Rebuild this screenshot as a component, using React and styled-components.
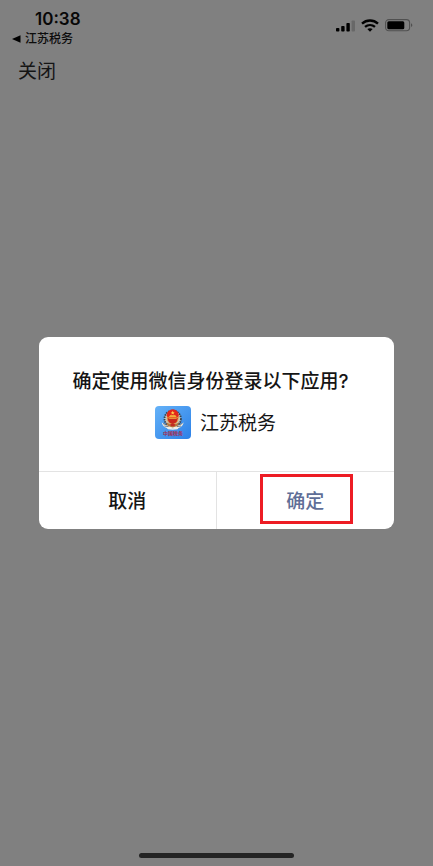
import React from "react";
import styled, { createGlobalStyle } from "styled-components";

const GlobalStyle = createGlobalStyle`
  * { box-sizing: border-box; }
  body {
    margin: 0;
    background: #808080;
    color: #151515;
    font-family: Inter, "Noto Sans CJK SC", sans-serif;
  }
  button { font-family: inherit; color: inherit; border: 0; background: none; padding: 0; cursor: pointer; }
`;

const Screen = styled.div`
  display: grid;
  grid-template-rows: 1fr auto 1fr;
  min-height: 100vh;
`;

const Header = styled.header`
  padding: 9px 20px 0 12px;
`;

const StatusBar = styled.div`
  display: flex;
  justify-content: space-between;
  align-items: flex-start;
`;

const Clock = styled.time`
  display: block;
  padding-left: 23px;
  font-size: 17px;
  line-height: 20px;
  font-weight: 600;
  color: #080808;
`;

const BackLink = styled.a`
  display: flex;
  align-items: center;
  gap: 4px;
  height: 20px;
  font-size: 12px;
  line-height: 20px;
  font-weight: 500;
  color: #0c0c0c;
  text-decoration: none;
`;

const StatusIcons = styled.div`
  display: flex;
  align-items: center;
  gap: 6px;
  padding-top: 10px;
`;

const CloseButton = styled.button`
  display: block;
  margin: 8px 0 0 6px;
  font-size: 19px;
  line-height: 30px;
`;

const Dialog = styled.section`
  margin: 0 39px;
  background: #fff;
  border-radius: 9px;
  overflow: hidden;
`;

const DialogBody = styled.div`
  display: flex;
  flex-direction: column;
  align-items: center;
  gap: 10px;
  padding: 31px 14px 32px 12px;
`;

const Title = styled.h1`
  margin: 0 10px 0 0;
  font-size: 19px;
  line-height: 28px;
  font-weight: 500;
  white-space: nowrap;
`;

const AppRow = styled.div`
  display: flex;
  align-items: center;
  gap: 9px;
  height: 33px;
  font-size: 19px;
  line-height: 28px;
`;

const AppName = styled.span`
  padding-top: 2px;
`;

const Actions = styled.div`
  display: grid;
  grid-template-columns: 1fr 1fr;
  border-top: 1px solid #e3e3e3;
`;

const Action = styled.button`
  display: flex;
  justify-content: center;
  align-items: center;
  height: 57px;
  padding-top: ${(p) => (p.$primary ? "0" : "2px")};
  font-size: 19px;
  line-height: 28px;
  font-weight: 500;

  && { color: ${(p) => (p.$primary ? "#5f6e97" : "#151515")}; }
  &:first-child { border-right: 1px solid #e3e3e3; }
`;

const Highlight = styled.span`
  display: flex;
  justify-content: center;
  align-items: center;
  width: 93px;
  height: 50px;
  margin: 0 0 3px 2px;
  padding: 5px 2px 0 0;
  border: 3px solid #ed1c24;
`;

const Footer = styled.footer`
  display: flex;
  justify-content: center;
  align-items: flex-end;
  padding-bottom: 8px;
`;

const HomeIndicator = styled.div`
  width: 36%;
  height: 5px;
  border-radius: 3px;
  background: #242424;
`;

const SignalIcon = () => (
  <svg width="19" height="12" viewBox="0 0 19 12" aria-hidden="true">
    <rect x="0" y="8" width="3.4" height="3.6" rx=".8" />
    <rect x="5.2" y="6" width="3.4" height="5.6" rx=".8" />
    <rect x="10.4" y="3" width="3.4" height="8.6" rx=".8" />
    <rect x="15.6" y=".5" width="3.4" height="11.1" rx=".8" fill="#686868" />
  </svg>
);

const WifiIcon = () => (
  <svg width="18" height="13" viewBox="0 0 18 13" fill="none" stroke="#000" aria-hidden="true">
    <path d="M1 4.6C5.6.5 12.4.5 17 4.6" strokeWidth="2.4" />
    <path d="M4 7.9c2.9-2.5 7.1-2.5 10 0" strokeWidth="2.3" />
    <path d="M9 12.8 6.3 10.1c1.6-1.3 3.8-1.3 5.4 0Z" fill="#000" stroke="none" />
  </svg>
);

const BatteryIcon = () => (
  <svg width="28" height="13" viewBox="0 0 28 13" aria-hidden="true">
    <rect x=".6" y=".6" width="24" height="11.2" rx="3.2" fill="none" stroke="#505050" strokeWidth="1.1" />
    <rect x="2.3" y="2.2" width="17" height="8" rx="1.5" />
    <path d="M26 4.3c1.8.7 1.8 3.1 0 3.8Z" fill="#505050" />
  </svg>
);

const TaxLogo = () => (
  <svg width="36" height="33" viewBox="0 0 36 33" role="img" aria-label="江苏税务">
    <defs>
      <linearGradient id="sky" x1="0" y1="0" x2="1" y2="1">
        <stop offset="0" stopColor="#65b2f8" />
        <stop offset="1" stopColor="#2b80e7" />
      </linearGradient>
    </defs>
    <rect width="36" height="33" rx="4" fill="url(#sky)" />
    <circle cx="17.7" cy="12.8" r="8.2" fill="#c9c5b8" />
    <circle cx="17.7" cy="12.8" r="8.2" fill="none" stroke="#39424c" strokeWidth="1.8" strokeDasharray="1.5 .9" />
    <path d="M6.8 16.5c.8 4.2 4.7 6.5 10.9 6.3 6.2.2 10.1-2.1 10.9-6.3l-3.8 2.2-7.1 2-7-2Z" fill="#efede5" />
    <path d="m8 17.6 4 1.4m-2.6 1 4.2.6m13.8-3-4 1.4m2.6 1-4.2.6" stroke="#59636d" strokeWidth=".8" />
    <ellipse cx="17.7" cy="9.2" rx="6" ry="5.9" fill="#e3271b" />
    <path d="M12.2 11c0 4.6 2.1 7 5.5 7s5.5-2.4 5.5-7l-2.2 1.4h-6.6Z" fill="#c9281e" stroke="#e8a33f" strokeWidth=".8" />
    <path d="m17.7 4.8.6 1.4h1.5l-1.2.9.4 1.4-1.3-.8-1.3.8.4-1.4-1.2-.9h1.5Z" fill="#ffd34e" />
    <path d="M14.2 10.8h7l-1-1.4h-5ZM13.8 12h7.8" fill="#f7c945" stroke="#f7c945" strokeWidth=".5" />
    <path d="m11.3 16.2 5.2 2.7h2.4l5.2-2.7-1.7 3.7-4.7 1.5-4.9-1.5Z" fill="#b7783c" />
    <path d="m14.8 18.8 2.9-1.8 2.9 1.8-1.6 1.5h-2.6Z" fill="#bf2d24" />
    <path d="m11 20.9 4.4.8 2.3 1.3 2.3-1.3 4.4-.8-2 2.4-4.7.5-4.7-.5Z" fill="#f3eee5" />
    <text x="18" y="28.8" textAnchor="middle" fontFamily="Noto Sans CJK SC, sans-serif" fontSize="5" fontWeight="700" fill="#a32d50">中国税务</text>
  </svg>
);

export default function App() {
  return (
    <>
      <GlobalStyle />
      <Screen>
        <Header>
          <StatusBar>
            <div>
              <Clock>10:38</Clock>
              <BackLink href="#">
                <svg width="9" height="8" viewBox="0 0 9 8" aria-hidden="true"><path d="M0 4 8.5.2v7.6Z" /></svg>
                江苏税务
              </BackLink>
            </div>
            <StatusIcons>
              <SignalIcon />
              <WifiIcon />
              <BatteryIcon />
            </StatusIcons>
          </StatusBar>
          <CloseButton type="button">关闭</CloseButton>
        </Header>
        <Dialog role="dialog" aria-modal="true" aria-labelledby="login-title">
          <DialogBody>
            <Title id="login-title">确定使用微信身份登录以下应用?</Title>
            <AppRow>
              <TaxLogo />
              <AppName>江苏税务</AppName>
            </AppRow>
          </DialogBody>
          <Actions>
            <Action type="button">取消</Action>
            <Action type="button" $primary>
              <Highlight>确定</Highlight>
            </Action>
          </Actions>
        </Dialog>
        <Footer>
          <HomeIndicator />
        </Footer>
      </Screen>
    </>
  );
}
